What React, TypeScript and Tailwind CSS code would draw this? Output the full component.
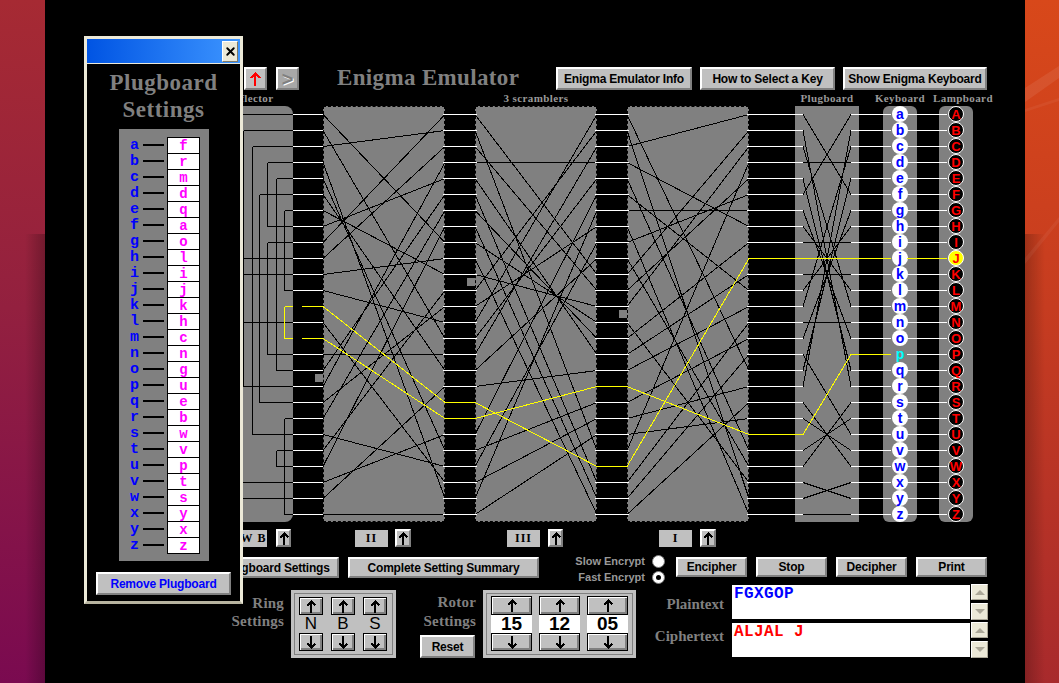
import { X } from "lucide-react";

const LETTERS = "abcdefghijklmnopqrstuvwxyz".split("");
const PLUG = "frmdqaolijkhcngueb wvptsyxz".replace(" ", "").split("");
const ROTOR_I = "EKMFLGDQVZNTOWYHXUSPAIBRCJ";
const ROTOR_II = "AJDKSIRUXBLHWTMCQGZNPYFVOE";
const ROTOR_III = "BDFHJLCPRTXVZNYEIWGAKMUSQO";

const BTN =
  "flex items-center justify-center bg-[#c0c0c0] border-2 border-t-white border-l-white border-r-[#808080] border-b-[#808080] font-['Liberation_Sans',sans-serif] font-bold text-[12px] tracking-[-0.2px] text-black whitespace-nowrap shrink-0";
const SPIN =
  "flex items-center justify-center bg-[#c0c0c0] border border-black shadow-[inset_1px_1px_0_#fff,inset_-2px_-2px_0_#808080]";
const SERIF = "font-['Liberation_Serif',serif] font-bold text-[#808080]";
const SMALL_LABEL = "font-['Liberation_Serif',serif] font-bold text-[11px] tracking-[0.4px] text-[#999] whitespace-nowrap";
const NAME_BOX =
  "flex items-center justify-center h-[17px] bg-[#c0c0c0] font-['Liberation_Serif',serif] font-bold text-[12px] tracking-[1px] text-black whitespace-nowrap shrink-0";

const y = (i: number) => 114.5 + 16 * i;

function UpArrow({ color = "black", size = 13 }: { color?: string; size?: number }) {
  return (
    <svg width={size * 0.77} height={size} viewBox="0 0 10 13" shapeRendering="crispEdges">
      <path d="M5 0 L10 5 L8 6 L6 4 V13 H4 V4 L2 6 L0 5 Z" fill={color} />
    </svg>
  );
}

function DownArrow() {
  return (
    <svg width={10} height={13} viewBox="0 0 10 13" shapeRendering="crispEdges">
      <path d="M5 13 L10 8 L8 7 L6 9 V0 H4 V9 L2 7 L0 8 Z" fill="black" />
    </svg>
  );
}

function Wires() {
  const black: React.ReactNode[] = [];
  const white: React.ReactNode[] = [];
  const yellow: React.ReactNode[] = [];
  const ln = (x1: number, y1: number, x2: number, y2: number, c: string, k: string) => (
    <line key={k} x1={x1} y1={y1} x2={x2} y2={y2} stroke={c} strokeWidth={1} />
  );

  // reflector
  const refl: [number, number, number][] = [
    [0, 24, 219.5], [1, 17, 243.5], [2, 20, 252.5], [3, 7, 267.5], [4, 16, 276.5], [5, 18, 259.5],
    [6, 11, 284.5], [8, 15, 267.5], [9, 23, 228.5], [10, 13, 235.5], [12, 14, 284.5], [19, 25, 284.5], [21, 22, 276.5],
  ];
  refl.forEach(([a, b, x]) => {
    const on = a === 12;
    const list = on ? yellow : black;
    const c = on ? "#ffff00" : "black";
    list.push(ln(x, y(a), 293, y(a), c, `ra${a}`), ln(x, y(b), 293, y(b), c, `rb${a}`), ln(x, y(a), x, y(b), c, `rv${a}`));
  });

  // gaps between panels
  LETTERS.forEach((_, i) => {
    if (i === 12 || i === 14) yellow.push(ln(302, y(i), 323, y(i), "#ffff00", `g1${i}`));
    else white.push(ln(293, y(i), 323, y(i), "white", `g1${i}`));
    if (i === 18 || i === 19) yellow.push(ln(445, y(i), 475, y(i), "#ffff00", `g2${i}`));
    else white.push(ln(443, y(i), 477, y(i), "white", `g2${i}`));
    if (i === 17 || i === 22) yellow.push(ln(597, y(i), 627, y(i), "#ffff00", `g3${i}`));
    else white.push(ln(595, y(i), 629, y(i), "white", `g3${i}`));
    if (i === 9 || i === 20) yellow.push(ln(748, y(i), 803, y(i), "#ffff00", `g4${i}`));
    else white.push(ln(747, y(i), 803, y(i), "white", `g4${i}`));
    if (i === 9 || i === 15) yellow.push(ln(851, y(i), 891, y(i), "#ffff00", `g5${i}`));
    else white.push(ln(851, y(i), 891, y(i), "white", `g5${i}`));
    if (i === 9) yellow.push(ln(907, y(i), 947, y(i), "#ffff00", `g6${i}`));
    else white.push(ln(907, y(i), 947, y(i), "white", `g6${i}`));
  });

  // rotors, right side index to left side index
  const rotor = (w: string, k: number, xl: number, xr: number, hot: number[]) => {
    for (let i = 0; i < 26; i++) {
      const o = (w.charCodeAt((i + k) % 26) - 65 - k + 26) % 26;
      const on = hot.includes(i);
      (on ? yellow : black).push(ln(xr, y(i), xl, y(o), on ? "#ffff00" : "black", `w${xl}-${i}`));
    }
  };
  rotor(ROTOR_II, 1, 323, 445, [18, 19]);
  rotor(ROTOR_III, 10, 475, 597, [17, 22]);
  rotor(ROTOR_I, 12, 627, 749, [9, 20]);

  // plugboard
  PLUG.forEach((p, i) => {
    const o = LETTERS.indexOf(p);
    const on = i === 9 || i === 15;
    (on ? yellow : black).push(ln(851, y(i), 803, y(o), on ? "#ffff00" : "black", `p${i}`));
  });

  return (
    <svg
      className="absolute inset-0 pointer-events-none"
      width={980}
      height={416}
      viewBox="45 106 980 416"
      shapeRendering="crispEdges"
    >
      {black}
      {white}
      {yellow}
    </svg>
  );
}

function Notch({ pos }: { pos: string }) {
  return <div className={`absolute w-[8px] h-[8px] bg-[#808080] ${pos}`} />;
}

function RingColumn({ value }: { value: string }) {
  return (
    <div className="flex flex-col w-[24px]">
      <div className={`${SPIN} h-[18px]`}><UpArrow /></div>
      <div className="flex items-center justify-center h-[18px] font-['Liberation_Sans',sans-serif] text-[17px] text-black">{value}</div>
      <div className={`${SPIN} h-[18px]`}><DownArrow /></div>
    </div>
  );
}

function RotorColumn({ value }: { value: string }) {
  return (
    <div className="flex flex-col w-[41px]">
      <div className={`${SPIN} h-[19px]`}><UpArrow /></div>
      <div className="flex items-center justify-center h-[18px] bg-white font-['Liberation_Sans',sans-serif] font-bold text-[19px] text-black">{value}</div>
      <div className={`${SPIN} h-[18px]`}><DownArrow /></div>
    </div>
  );
}

function ScrollBox({ text, color }: { text: string; color: string }) {
  return (
    <div className="flex h-[34px]">
      <div className={`w-[238px] bg-white pl-[2px] pt-[1px] font-['Liberation_Mono',monospace] font-bold text-[16px] leading-[16px] tracking-[0.4px] whitespace-pre ${color}`}>
        {text}
      </div>
      <div className="flex flex-col gap-[3px] w-[17px] h-[36px] ml-[1px] -mt-[1px]">
        <div className="flex items-center justify-center h-[16px] bg-[#ece9d8] border border-t-white border-l-white border-r-[#aca899] border-b-[#aca899]">
          <div className="w-0 h-0 border-x-[5px] border-x-transparent border-b-[5px] border-b-[#aca899]" />
        </div>
        <div className="flex items-center justify-center h-[17px] bg-[#ece9d8] border border-t-white border-l-white border-r-[#aca899] border-b-[#aca899]">
          <div className="w-0 h-0 border-x-[5px] border-x-transparent border-t-[5px] border-t-[#aca899]" />
        </div>
      </div>
    </div>
  );
}

function PlugboardPopup() {
  return (
    <div className="absolute left-[39px] top-[36px] w-[159px] h-[568px] flex flex-col bg-black border-[3px] border-[#ece9d8] border-b-[#b8b4a0]">
      <div className="flex items-center justify-end h-[25px] pr-[2px] bg-[linear-gradient(90deg,#0054e3,#3d95ff)] border-b border-[#ece9d8] shrink-0">
        <div className="flex items-center justify-center w-[16px] h-[21px] bg-[#ece9d8] border border-t-white border-l-white border-r-[#7f7b6a] border-b-[#7f7b6a]">
          <X size={13} strokeWidth={3.5} color="black" />
        </div>
      </div>
      <div className={`${SERIF} text-center text-[23px] leading-[27px] tracking-[0.5px] pt-[5px]`}>
        <div>Plugboard</div>
        <div>Settings</div>
      </div>
      <div className="flex ml-[32px] mt-[6px] w-[90px] h-[432px] pt-[8px] bg-[#808080]">
        <div className="flex flex-col w-[48px] shrink-0">
          {LETTERS.map((l) => (
            <div key={l} className="flex items-center h-[16px]">
              <span className="w-[24px] pl-[7px] text-center font-['Liberation_Mono',monospace] font-bold text-[15px] text-[#0000ff] leading-none">{l}</span>
              <span className="w-[21px] h-[2px] bg-black" />
            </div>
          ))}
        </div>
        <div className="flex flex-col self-start w-[33px] border border-black border-b-0 bg-white">
          {PLUG.map((p, i) => (
            <div key={i} className="flex items-center justify-center h-[16px] border-b border-black font-['Liberation_Mono',monospace] font-bold text-[14px] text-[#ff00ff] leading-none">
              {p}
            </div>
          ))}
        </div>
      </div>
      <div className={`${BTN} ml-[9px] mt-[11px] w-[135px] h-[23px] text-[#0000ff]!`}>Remove Plugboard</div>
    </div>
  );
}

export default function App() {
  return (
    <div className="flex w-[1059px] h-[683px] overflow-hidden">
      <div className="relative w-[45px] shrink-0 bg-[linear-gradient(180deg,#a62a33_0%,#93203f_45%,#7a0a50_100%)]">
        <div className="absolute right-0 top-[234px] bottom-0 w-[20px] bg-[linear-gradient(90deg,transparent,rgba(0,0,0,0.25))]" />
      </div>

      <div className="relative w-[980px] shrink-0 bg-black pt-[67px]">
        {/* toolbar */}
        <div className="flex items-center h-[23px] ml-[199px]">
          <div className={`${BTN} w-[23px] h-[23px]`}><UpArrow color="#ff0000" size={14} /></div>
          <div className={`${BTN} w-[23px] h-[23px] ml-[9px] bg-[#a8a8a8]! text-[#808080]! text-[20px]! [text-shadow:1px_1px_0_#fff]`}>&gt;</div>
          <div className={`${SERIF} w-[181px] ml-[38px] text-[23px] tracking-[0.35px] whitespace-nowrap`}>Enigma Emulator</div>
          <div className={`${BTN} w-[136px] h-[23px] ml-[38px]`}>Enigma Emulator Info</div>
          <div className={`${BTN} w-[135px] h-[23px] ml-[8px]`}>How to Select a Key</div>
          <div className={`${BTN} w-[144px] h-[23px] ml-[8px]`}>Show Enigma Keyboard</div>
        </div>

        {/* panel captions */}
        <div className="flex items-center h-[16px] ml-[162px]">
          <div className={`${SMALL_LABEL} w-[86px] flex justify-center`}>Reflector</div>
          <div className={`${SMALL_LABEL} w-[426px] ml-[30px] flex justify-center`}>3 scramblers</div>
          <div className={`${SMALL_LABEL} w-[64px] ml-[46px] flex justify-center`}>Plugboard</div>
          <div className={`${SMALL_LABEL} w-[34px] ml-[24px] flex justify-center`}>Keyboard</div>
          <div className={`${SMALL_LABEL} w-[34px] ml-[22px] pl-[14px] flex justify-center`}>Lampboard</div>
        </div>

        {/* machine */}
        <div className="relative flex h-[416px] pl-[162px]">
          <div className="w-[86px] bg-[#808080] rounded-r-[8px] rounded-bl-[8px]" />
          <div className="w-[122px] ml-[30px] bg-[#808080] border border-dashed border-black" />
          <div className="w-[122px] ml-[30px] bg-[#808080] border border-dashed border-black" />
          <div className="w-[122px] ml-[30px] bg-[#808080] border border-dashed border-black" />
          <div className="w-[64px] ml-[46px] bg-[#808080]" />
          <div className="flex flex-col items-center w-[34px] ml-[24px] bg-[#808080] rounded-[6px]">
            {LETTERS.map((l, i) => (
              <div
                key={l}
                className={`flex items-center justify-center w-[16px] h-[16px] rounded-full font-['Liberation_Sans',sans-serif] font-bold text-[14px] leading-none shrink-0 ${i === 15 ? "bg-[#808080] text-[#00ffff]" : "bg-white text-[#0000ff]"}`}
              >
                {l}
              </div>
            ))}
          </div>
          <div className="flex flex-col items-center w-[34px] ml-[22px] bg-[#808080] rounded-[6px]">
            {LETTERS.map((l, i) => (
              <div
                key={l}
                className={`flex items-center justify-center w-[16px] h-[16px] rounded-full border border-white font-['Liberation_Sans',sans-serif] font-bold text-[13px] leading-none text-[#ff0000] shrink-0 ${i === 9 ? "bg-[#ffff00] border-[#ffff00]" : "bg-black"}`}
              >
                {l.toUpperCase()}
              </div>
            ))}
          </div>
          <Wires />
          <Notch pos="left-[422px] top-[172px]" />
          <Notch pos="left-[270px] top-[268px]" />
          <Notch pos="left-[574px] top-[204px]" />
        </div>

        {/* rotor names */}
        <div className="flex items-center h-[18px] mt-[7px]">
          <div className={`${NAME_BOX} w-[47px] ml-[175px]`}>UKW B</div>
          <div className={`${BTN} w-[15px] h-[18px] ml-[9px]`}><UpArrow /></div>
          <div className={`${NAME_BOX} w-[33px] ml-[64px]`}>II</div>
          <div className={`${BTN} w-[16px] h-[18px] ml-[7px]`}><UpArrow /></div>
          <div className={`${NAME_BOX} w-[33px] ml-[96px]`}>III</div>
          <div className={`${BTN} w-[15px] h-[18px] ml-[8px]`}><UpArrow /></div>
          <div className={`${NAME_BOX} w-[33px] ml-[96px]`}>I</div>
          <div className={`${BTN} w-[16px] h-[18px] ml-[8px]`}><UpArrow /></div>
        </div>

        {/* buttons */}
        <div className="flex h-[21px] mt-[10px]">
          <div className={`${BTN} w-[125px] ml-[169px]`}>Plugboard Settings</div>
          <div className={`${BTN} w-[191px] ml-[9px]`}>Complete Setting Summary</div>
          <div className="flex flex-col items-end w-[126px] -mt-[4px] font-['Liberation_Sans',sans-serif] font-bold text-[11px] text-[#999] whitespace-nowrap">
            <div className="flex items-center h-[16px]">
              Slow Encrypt
              <span className="w-[13px] h-[13px] ml-[7px] rounded-full bg-white border border-[#808080]" />
            </div>
            <div className="flex items-center h-[16px]">
              Fast Encrypt
              <span className="flex items-center justify-center w-[13px] h-[13px] ml-[7px] rounded-full bg-white border border-[#808080]">
                <span className="w-[5px] h-[5px] rounded-full bg-black" />
              </span>
            </div>
          </div>
          <div className={`${BTN} w-[71px] ml-[11px] h-[20px]`}>Encipher</div>
          <div className={`${BTN} w-[71px] ml-[9px] h-[20px]`}>Stop</div>
          <div className={`${BTN} w-[71px] ml-[9px] h-[20px]`}>Decipher</div>
          <div className={`${BTN} w-[71px] ml-[9px] h-[20px]`}>Print</div>
        </div>

        {/* settings */}
        <div className="flex h-[68px] mt-[12px]">
          <div className={`${SERIF} w-[239px] text-right text-[15px] leading-[18px] tracking-[0.2px] pt-[4px]`}>
            <div>Ring</div>
            <div>Settings</div>
          </div>
          <div className="flex gap-[8px] w-[105px] ml-[7px] pl-[5px] pt-[4px] bg-[#c0c0c0] border-[3px] border-[#c0c0c0] outline outline-offset-[-4px] outline-[#808080]">
            <RingColumn value="N" />
            <RingColumn value="B" />
            <RingColumn value="S" />
          </div>
          <div className="flex flex-col items-end w-[80px]">
            <div className={`${SERIF} text-right text-[15px] leading-[19px] tracking-[0.2px] pt-[3px]`}>
              <div>Rotor</div>
              <div>Settings</div>
            </div>
            <div className={`${BTN} w-[55px] h-[23px] mt-auto mr-[1px]`}>Reset</div>
          </div>
          <div className="flex gap-[7px] w-[153px] ml-[7px] pl-[8px] pt-[6px] bg-[#c0c0c0] outline outline-offset-[-4px] outline-[#808080]">
            <RotorColumn value="15" />
            <RotorColumn value="12" />
            <RotorColumn value="05" />
          </div>
          <div className={`${SERIF} flex flex-col items-end w-[88px] text-[15px] leading-[18px] pt-[5px] gap-[14px]`}>
            <div>Plaintext</div>
            <div>Ciphertext</div>
          </div>
          <div className="flex flex-col gap-[4px] ml-[8px] -mt-[5px]">
            <ScrollBox text="FGXGOP" color="text-[#0000ff]" />
            <ScrollBox text="ALJAL J" color="text-[#ff0000]" />
          </div>
        </div>

        <PlugboardPopup />
      </div>

      <div className="relative flex-1 bg-[linear-gradient(180deg,#d8481a_0%,#c63c20_45%,#a82a2c_100%)]">
        <div className="absolute left-0 top-[234px] bottom-0 w-[20px] bg-[linear-gradient(270deg,transparent,rgba(0,0,0,0.22))]" />
        <svg className="absolute inset-0" width={34} height={683}>
          <polygon points="0,88 34,66 34,78 0,102" fill="white" fillOpacity="0.08" />
          <polygon points="0,109 34,98 34,101 0,112" fill="white" fillOpacity="0.05" />
          <polygon points="0,258 34,217 34,222 0,264" fill="white" fillOpacity="0.05" />
        </svg>
      </div>
    </div>
  );
}
